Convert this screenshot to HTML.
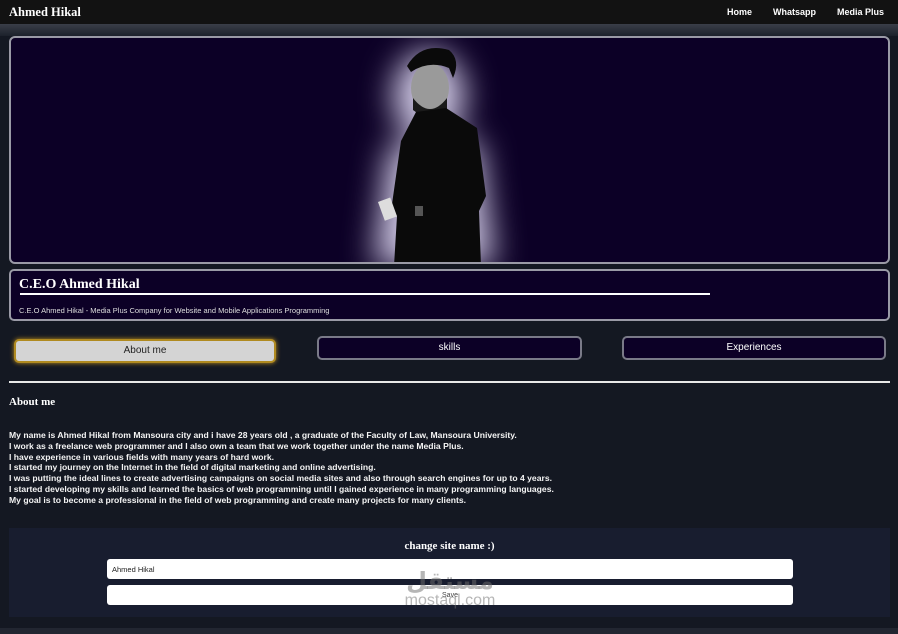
<!DOCTYPE html>
<html><head><meta charset="utf-8">
<style>
*{box-sizing:border-box;margin:0;padding:0}
body{width:898px;height:634px;overflow:hidden;background:#141822;font-family:"Liberation Sans",sans-serif;color:#fff;position:relative}
.nav{position:absolute;left:0;top:0;width:898px;height:24px;background:#121212;}
.nav .logo{position:absolute;left:9px;top:5px;font-family:"Liberation Serif",serif;font-weight:bold;font-size:12.5px}
.nav .links{position:absolute;right:14px;top:7px;font-size:9px;font-weight:bold}
.nav .links span{margin-left:21px}
.shade{position:absolute;left:0;top:24px;width:898px;height:12px;background:linear-gradient(#3a3e48,#1c212b)}
.hero{position:absolute;left:9px;top:36px;width:881px;height:228px;background:#0c0026;border:2px solid #9a9aa6;border-radius:6px;overflow:hidden}
.card{position:absolute;left:9px;top:269px;width:881px;height:52px;background:#0c0026;border:2px solid #9a9aa6;border-radius:5px}
.card h1{position:absolute;left:8px;top:6px;font-family:"Liberation Serif",serif;font-size:14px;font-weight:bold}
.card .ul{position:absolute;left:9px;top:22px;width:690px;height:2px;background:#fff}
.card p{position:absolute;left:8px;top:35px;font-size:7.5px;color:#ddd}
.btn{position:absolute;top:336px;height:24px;border-radius:5px;background:#0c0026;border:2px solid #7a7a88;font-size:10px;text-align:center;line-height:20px}
.btn.act{background:#d4d4d4;color:#222;border:2px solid #b08a20;box-shadow:0 0 5px #c09020;top:339px}
.hr{position:absolute;left:9px;top:381px;width:881px;height:1.5px;background:#e8e8e8}
.h2{position:absolute;left:9px;top:396px;font-family:"Liberation Serif",serif;font-weight:bold;font-size:11px}
.para{position:absolute;left:9px;top:430px;font-size:8.6px;font-weight:bold;line-height:10.8px;color:#f4f4f4;white-space:nowrap}
.form{position:absolute;left:9px;top:528px;width:881px;height:89px;background:#181d2f}
.form h3{position:absolute;width:100%;top:12px;text-align:center;font-family:"Liberation Serif",serif;font-weight:bold;font-size:11px}
.inp{position:absolute;left:98px;width:686px;height:20px;background:#fff;border-radius:3px;color:#222;font-size:7.5px}
.wm{position:absolute;left:390px;top:566px;width:120px;text-align:center;color:rgba(110,110,110,.5);font-weight:bold}
</style></head><body>
<div class="nav"><div class="logo">Ahmed Hikal</div><div class="links"><span>Home</span><span>Whatsapp</span><span>Media Plus</span></div></div>
<div class="shade"></div>
<div class="hero">
<svg width="881" height="228" style="position:absolute;left:-2px;top:-2px">
<defs><filter id="b" x="-50%" y="-50%" width="200%" height="200%"><feGaussianBlur stdDeviation="16"/></filter></defs>
<g filter="url(#b)" fill="#cfc8e4">
<ellipse cx="420" cy="60" rx="36" ry="45"/>
<path d="M380 110 L470 105 L485 230 L365 230 Z"/>
</g>
<g fill="#0a0a0a">
<ellipse cx="421" cy="52" rx="19" ry="25" fill="#9a9a9a"/>
<path d="M398 30 Q412 6 440 14 Q452 24 444 42 L440 32 Q420 24 402 36 Z"/>
<path d="M404 62 Q421 84 438 62 L438 74 Q421 88 404 74 Z" fill="#1a1a1a"/>
<path d="M407 76 L437 72 L468 92 L477 160 L470 175 L472 230 L385 230 L388 180 L382 175 L392 105 Z"/>
<rect x="372" y="163" width="13" height="20" fill="#ddd" transform="rotate(-20 379 173)"/>
<rect x="406" y="170" width="8" height="10" fill="#555"/>
</g>
</svg>
</div>
<div class="card"><h1>C.E.O Ahmed Hikal</h1><div class="ul"></div><p>C.E.O Ahmed Hikal - Media Plus Company for Website and Mobile Applications Programming</p></div>
<div class="btn act" style="left:14px;width:262px">About me</div>
<div class="btn" style="left:317px;width:265px">skills</div>
<div class="btn" style="left:622px;width:264px">Experiences</div>
<div class="hr"></div>
<div class="h2">About me</div>
<div class="para">My name is Ahmed Hikal from Mansoura city and i have 28 years old , a graduate of the Faculty of Law, Mansoura University.<br>I work as a freelance web programmer and I also own a team that we work together under the name Media Plus.<br>I have experience in various fields with many years of hard work.<br>I started my journey on the Internet in the field of digital marketing and online advertising.<br>I was putting the ideal lines to create advertising campaigns on social media sites and also through search engines for up to 4 years.<br>I started developing my skills and learned the basics of web programming until I gained experience in many programming languages.<br>My goal is to become a professional in the field of web programming and create many projects for many clients.</div>
<div class="form"><h3>change site name :)</h3>
<div class="inp" style="top:31px;padding:6px 5px">Ahmed Hikal</div>
<div class="inp" style="top:57px;text-align:center;padding-top:7px;font-size:7px;color:#444">Save</div>
</div>
<div class="wm"><div style="font-size:24px;line-height:26px;font-family:'Noto Sans CJK SC','DejaVu Sans',sans-serif">مستقل</div><div style="font-size:16px;line-height:18px;font-weight:normal">mostaql.com</div></div>
<div style="position:absolute;left:0;top:628px;width:898px;height:6px;background:#222631"></div>
</body></html>
